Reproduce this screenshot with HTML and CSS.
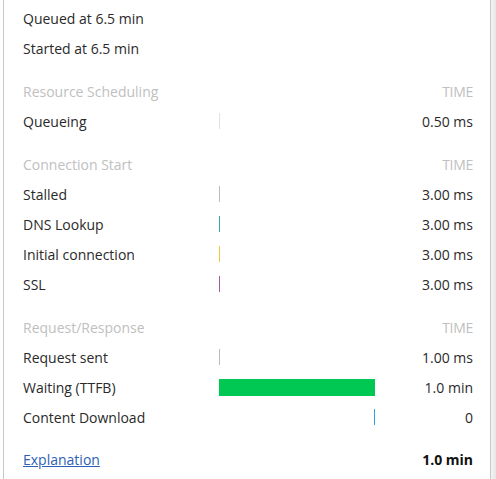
FILE: index.html
```html
<!DOCTYPE html>
<html>
<head>
<meta charset="utf-8">
<link rel="stylesheet" href="styles.css">
</head>
<body>
<div class="frame">
  <div class="popup">
    <div class="row plain"><span class="label">Queued at 6.5 min</span></div>
    <div class="row plain"><span class="label">Started at 6.5 min</span></div>

    <div class="row head"><span class="label">Resource Scheduling</span><span></span><span class="time">TIME</span></div>
    <div class="row"><span class="label">Queueing</span><span class="bar"><i class="tick c-queue"></i></span><span class="time">0.50 ms</span></div>

    <div class="row head"><span class="label">Connection Start</span><span></span><span class="time">TIME</span></div>
    <div class="row"><span class="label">Stalled</span><span class="bar"><i class="tick c-stall"></i></span><span class="time">3.00 ms</span></div>
    <div class="row"><span class="label">DNS Lookup</span><span class="bar"><i class="tick c-dns"></i></span><span class="time">3.00 ms</span></div>
    <div class="row"><span class="label">Initial connection</span><span class="bar"><i class="tick c-conn"></i></span><span class="time">3.00 ms</span></div>
    <div class="row"><span class="label">SSL</span><span class="bar"><i class="tick c-ssl"></i></span><span class="time">3.00 ms</span></div>

    <div class="row head"><span class="label">Request/Response</span><span></span><span class="time">TIME</span></div>
    <div class="row"><span class="label">Request sent</span><span class="bar"><i class="tick c-stall"></i></span><span class="time">1.00 ms</span></div>
    <div class="row"><span class="label">Waiting (TTFB)</span><span class="bar"><i class="fill c-wait"></i></span><span class="time">1.0 min</span></div>
    <div class="row"><span class="label">Content Download</span><span class="bar end"><i class="tick c-down"></i></span><span class="time">0</span></div>

    <div class="row foot"><a class="label link" href="#">Explanation</a><span></span><span class="time total">1.0 min</span></div>
  </div>
  <div class="scroll"></div>
</div>
</body>
</html>
```

FILE: styles.css
```css
html, body {
  margin: 0;
  padding: 0;
  background: #fff;
}
body {
  font-family: "Open Sans", "Noto Sans", sans-serif;
  font-size: 14px;
  color: #2a2a2a;
}
.frame {
  display: flex;
  width: 496px;
  height: 479px;
  overflow: hidden;
}
.popup {
  margin-left: 3px;
  width: 488px;
  height: 479px;
  border-left: 1px solid #c8c8c8;
  border-right: 1px solid #c8c8c8;
  padding: 3px 17px 0 19px;
  box-sizing: border-box;
  background: #fff;
}
.scroll {
  flex: 1;
  background: linear-gradient(to right, #f4f4f4, #e6e6e6);
}
.row {
  display: grid;
  grid-template-columns: 196px 160px 1fr;
  height: 30px;
  align-items: center;
}
.row.head {
  margin-top: 13px;
  color: #c0c0c0;
}
.row.foot {
  margin-top: 12px;
}
.time {
  text-align: right;
}
.head .time {
  font-size: 14px;
  letter-spacing: -0.3px;
}
.total {
  font-weight: 700;
  color: #111;
}
.link {
  color: #2b5fb4;
  text-decoration: underline;
}
.bar {
  display: flex;
  align-items: center;
  height: 100%;
}
.bar.end {
  justify-content: flex-end;
  padding-right: 4px;
}
.tick {
  display: block;
  width: 1px;
  height: 16px;
}
.fill {
  display: block;
  width: 156px;
  height: 17px;
}
.c-queue { background: #e2e2e2; }
.c-stall { background: #bbbbbb; }
.c-dns { background: #3aa3ae; }
.c-conn { background: #f2c440; }
.c-ssl { background: #a05aa0; }
.c-wait { background: #00c853; }
.c-down { background: #2aa3dc; }
```
